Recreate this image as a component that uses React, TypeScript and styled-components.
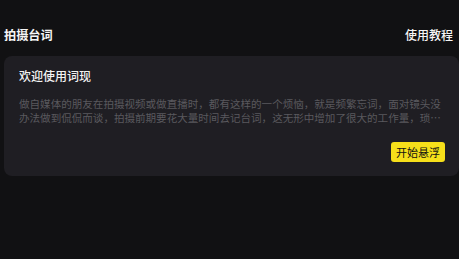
import { createGlobalStyle } from 'styled-components'
import styled from 'styled-components'

const GlobalStyle = createGlobalStyle`
  html, body {
    margin: 0;
    padding: 0;
    background: #111113;
  }
  body {
    font-family: "Noto Sans CJK SC", "Noto Sans", sans-serif;
    color: #f2f2f2;
  }
`

const Page = styled.div`
  width: 459px;
  height: 259px;
  background: #111113;
  padding: 26px 0 0 4px;
  box-sizing: border-box;
`

const Header = styled.div`
  display: flex;
  justify-content: space-between;
  align-items: center;
  height: 18px;
  padding-right: 6px;
  margin-bottom: 12px;
`

const HeaderTitle = styled.span`
  font-size: 12.2px;
  font-weight: 700;
  color: #f5f5f5;
  line-height: 18px;
`

const HeaderLink = styled.span`
  font-size: 12px;
  font-weight: 500;
  color: #f5f5f5;
  line-height: 18px;
`

const Card = styled.div`
  background: #1f1e23;
  border-radius: 8px;
  padding: 11px 14px 14px 15px;
  display: flex;
  flex-direction: column;
`

const CardTitle = styled.div`
  font-size: 12px;
  font-weight: 500;
  line-height: 18px;
  color: #f2f2f2;
  margin-bottom: 12px;
`

const Desc = styled.p`
  margin: 0;
  font-size: 10.55px;
  line-height: 14px;
  color: #5a595e;
  display: -webkit-box;
  -webkit-line-clamp: 2;
  -webkit-box-orient: vertical;
  overflow: hidden;
  padding-right: 2px;
`

const Actions = styled.div`
  display: flex;
  justify-content: flex-end;
  margin-top: 17px;
`

const FloatButton = styled.button`
  height: 20px;
  padding: 0 5px;
  border: none;
  border-radius: 3px;
  background: #f6df1a;
  color: #111;
  font-family: inherit;
  font-size: 11px;
  line-height: 20px;
  cursor: pointer;
`

export default function App() {
  return (
    <>
      <GlobalStyle />
      <Page>
        <Header>
          <HeaderTitle>拍摄台词</HeaderTitle>
          <HeaderLink>使用教程</HeaderLink>
        </Header>
        <Card>
          <CardTitle>欢迎使用词现</CardTitle>
          <Desc>
            做自媒体的朋友在拍摄视频或做直播时，都有这样的一个烦恼，就是频繁忘词，面对镜头没办法做到侃侃而谈，拍摄前期要花大量时间去记台词，这无形中增加了很大的工作量，琐碎的准备工作让人疲惫不堪。
          </Desc>
          <Actions>
            <FloatButton>开始悬浮</FloatButton>
          </Actions>
        </Card>
      </Page>
    </>
  )
}
